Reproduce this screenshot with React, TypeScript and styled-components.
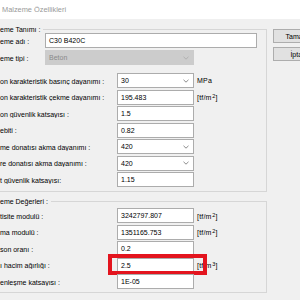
import React from "react";
import styled, { createGlobalStyle } from "styled-components";

const GlobalStyle = createGlobalStyle`
  html, body { margin: 0; padding: 0; background: #f0f0f0; }
  body {
    font-family: "Liberation Sans", Arial, sans-serif;
    font-size: 7px;
    color: #000;
  }
`;

const Window = styled.div`
  width: 300px;
  height: 300px;
  overflow: hidden;
  background: #f0f0f0;
  display: flex;
  flex-direction: column;
`;

const TitleBar = styled.div`
  height: 19px;
  flex-shrink: 0;
  background: #fff;
  display: flex;
  align-items: center;
  padding-left: 2px;
  color: #999;
  font-size: 7.4px;
`;

const Content = styled.div`
  display: flex;
  gap: 6px;
  padding-top: 10px;
`;

const Main = styled.div`
  width: 267px;
  flex-shrink: 0;
  display: flex;
  flex-direction: column;
  gap: 9px;
`;

const Group = styled.div<{ $padBottom: number }>`
  box-sizing: border-box;
  border: 1px solid #d6d6d6;
  border-left: none;
  padding-bottom: ${(p) => p.$padBottom}px;
  display: flex;
  flex-direction: column;
`;

const GroupTitle = styled.div<{ $after: number }>`
  width: max-content;
  height: 9px;
  line-height: 9px;
  margin-top: -5px;
  margin-bottom: ${(p) => p.$after}px;
  padding-right: 3px;
  background: #f0f0f0;
  white-space: nowrap;
`;

const Rows = styled.div<{ $top: number }>`
  display: flex;
  flex-direction: column;
  gap: 1.5px;
  margin-top: ${(p) => p.$top}px;
`;

const Row = styled.div`
  position: relative;
  display: flex;
  align-items: center;
  height: 15px;
`;

const Label = styled.div<{ $w: number }>`
  width: ${(p) => p.$w}px;
  flex-shrink: 0;
  white-space: nowrap;
  overflow: hidden;
  padding-top: 1px;
`;

const Field = styled.div<{ $w: number; $disabled?: boolean }>`
  box-sizing: border-box;
  width: ${(p) => p.$w}px;
  height: 15px;
  flex-shrink: 0;
  display: flex;
  align-items: center;
  justify-content: space-between;
  padding: 0 4px 0 3px;
  border: 1px solid ${(p) => (p.$disabled ? "#cccccc" : "#acacac")};
  background: ${(p) => (p.$disabled ? "#cccccc" : "#ffffff")};
  color: ${(p) => (p.$disabled ? "#8a8a8a" : "#000")};
  white-space: nowrap;
`;

const Unit = styled.div`
  margin-left: 3px;
  white-space: nowrap;
  letter-spacing: 0.2px;
`;

const Sup = styled.span`
  font-size: 5.5px;
  vertical-align: 2px;
  margin-left: 0.5px;
`;

const Highlight = styled.div`
  position: absolute;
  left: 108px;
  top: -3.5px;
  width: 99px;
  height: 21px;
  box-sizing: border-box;
  border: 4px solid #e3141e;
  pointer-events: none;
`;

const Buttons = styled.div`
  display: flex;
  flex-direction: column;
  gap: 4px;
`;

const Button = styled.div`
  box-sizing: border-box;
  width: 48px;
  height: 14px;
  border: 1px solid #adadad;
  background: #e1e1e1;
  display: flex;
  align-items: center;
  justify-content: center;
  white-space: nowrap;
`;

const Chevron = ({ color = "#6d6d6d" }: { color?: string }) => (
  <svg width="6" height="4" viewBox="0 0 6 4">
    <polyline points="0.5,0.8 3,3.2 5.5,0.8" fill="none" stroke={color} strokeWidth="0.8" />
  </svg>
);

type RowDef = {
  label: string;
  value: string;
  combo?: boolean;
  unit?: "MPa" | "2" | "3";
  highlight?: boolean;
};

const group1: RowDef[] = [
  { label: "on karakteristik basınç dayanımı :", value: "30", combo: true, unit: "MPa" },
  { label: "on karakteristik çekme dayanımı :", value: "195.483", unit: "2" },
  { label: "on güvenlik katsayısı :", value: "1.5" },
  { label: "ebiti :", value: "0.82" },
  { label: "me donatısı akma dayanımı :", value: "420", combo: true },
  { label: "re donatısı akma dayanımı :", value: "420", combo: true },
  { label: "t güvenlik katsayısı:", value: "1.15" },
];

const group2: RowDef[] = [
  { label: "tisite modulü :", value: "3242797.807", unit: "2" },
  { label: "ma modulü :", value: "1351165.753", unit: "2" },
  { label: "son oranı :", value: "0.2" },
  { label: "ı hacim ağırlığı :", value: "2.5", unit: "3", highlight: true },
  { label: "enleşme katsayısı :", value: "1E-05" },
];

const UnitText = ({ unit }: { unit: "MPa" | "2" | "3" }) =>
  unit === "MPa" ? (
    <Unit>MPa</Unit>
  ) : (
    <Unit>
      [tf/m<Sup>{unit}</Sup>]
    </Unit>
  );

const PropRow = ({ r }: { r: RowDef }) => (
  <Row>
    <Label $w={117}>{r.label}</Label>
    <Field $w={77}>
      <span>{r.value}</span>
      {r.combo && <Chevron />}
    </Field>
    {r.unit && <UnitText unit={r.unit} />}
    {r.highlight && <Highlight />}
  </Row>
);

export default function App() {
  return (
    <>
      <GlobalStyle />
      <Window>
        <TitleBar>Malzeme Özellikleri</TitleBar>
        <Content>
          <Main>
            <Group $padBottom={4}>
              <GroupTitle $after={-1}>eme Tanımı :</GroupTitle>
              <Row>
                <Label $w={45}>eme adı :</Label>
                <Field $w={212}>
                  <span>C30 B420C</span>
                </Field>
              </Row>
              <Rows $top={2}>
                <Row>
                  <Label $w={45}>eme tipi :</Label>
                  <Field $w={149} $disabled>
                    <span>Beton</span>
                    <Chevron color="#a8a8a8" />
                  </Field>
                </Row>
              </Rows>
              <Rows $top={8}>
                {group1.map((r, i) => (
                  <PropRow key={i} r={r} />
                ))}
              </Rows>
            </Group>
            <Group $padBottom={3}>
              <GroupTitle $after={2}>eme Değerleri :</GroupTitle>
              <Rows $top={0}>
                {group2.map((r, i) => (
                  <PropRow key={i} r={r} />
                ))}
              </Rows>
            </Group>
          </Main>
          <Buttons>
            <Button>Tamam</Button>
            <Button>İptal</Button>
          </Buttons>
        </Content>
      </Window>
    </>
  );
}
